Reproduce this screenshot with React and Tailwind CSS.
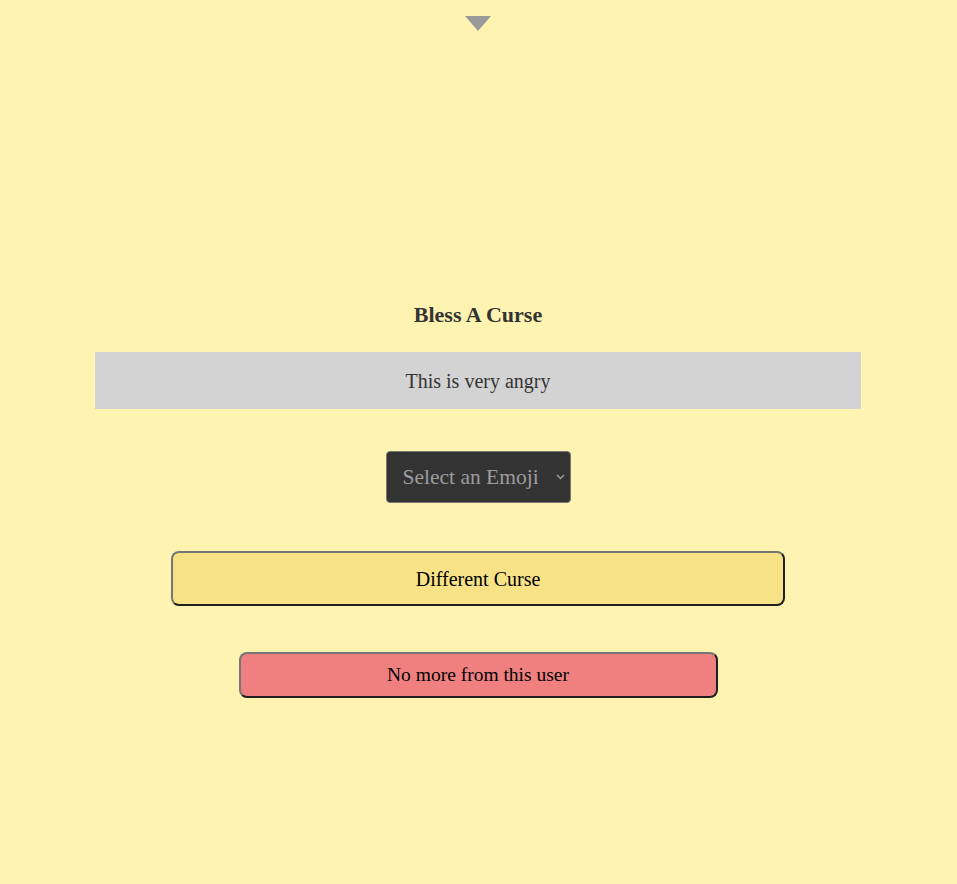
import React from 'react';

export default function App() {
  return (
    <div
      className="min-h-screen w-full bg-[#fef3b0] flex flex-col items-center pr-px text-[#333]"
      style={{ fontFamily: '"Liberation Serif", serif' }}
    >
      <div className="pt-4">
        <svg width="26" height="15" viewBox="0 0 26 15">
          <path d="M0 0 H26 L13 15 Z" fill="#9a9a9a" />
        </svg>
      </div>

      <h2 className="mt-[269px] text-[22px] font-bold leading-[30px]">Bless A Curse</h2>

      <div className="mt-[22px] w-[766px] h-[57px] bg-[#d3d3d3] flex items-center justify-center text-[20px]">
        This is very angry
      </div>

      <div className="mt-[42px] relative">
        <select
          className="appearance-none w-[185px] h-[52px] bg-[#333] border border-[#777] rounded-[4px] text-[#9c9c9c] text-[21.5px] pl-4 pr-8 outline-none"
          style={{ fontFamily: '"Liberation Serif", serif' }}
          defaultValue=""
        >
          <option value="">Select an Emoji</option>
          <option value="angry">😠</option>
          <option value="smile">😊</option>
        </select>
        <svg
          className="absolute right-[6px] top-[23px] pointer-events-none"
          width="9"
          height="6"
          viewBox="0 0 9 6"
        >
          <path d="M1 1 L4.5 4.5 L8 1" stroke="#9c9c9c" strokeWidth="1.5" fill="none" />
        </svg>
      </div>

      <button className="mt-[48px] w-[614px] h-[55px] bg-[#f7e385] rounded-[8px] border-2 border-[#767676] border-r-[#1f1f1f] border-b-[#1f1f1f] text-black text-[20px]">
        Different Curse
      </button>

      <button className="mt-[46px] w-[479px] h-[46px] bg-[#f08080] rounded-[8px] border-2 border-[#767676] border-r-[#1f1f1f] border-b-[#1f1f1f] text-black text-[19.5px]">
        No more from this user
      </button>
    </div>
  );
}
